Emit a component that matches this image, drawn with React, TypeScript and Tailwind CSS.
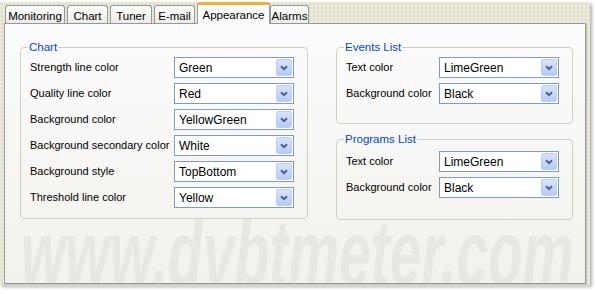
import React from "react";

const font = { fontFamily: '"Liberation Sans", Arial, sans-serif' };

type Tab = { label: string; width: string; active?: boolean };

const TABS: Tab[] = [
  { label: "Monitoring", width: "w-[60px]" },
  { label: "Chart", width: "w-[41px]" },
  { label: "Tuner", width: "w-[42px]" },
  { label: "E-mail", width: "w-[41px]" },
  { label: "Appearance", width: "w-[73px]", active: true },
  { label: "Alarms", width: "w-[39px]" },
];

function Combo({ value }: { value: string }) {
  return (
    <div className="w-[120px] h-[21px] border border-[#7f9db9] bg-white flex items-center shrink-0">
      <span className="flex-1 pl-[4px] text-[12px] leading-none text-black">{value}</span>
      <span className="w-[16px] h-[17px] mr-[1px] rounded-[2px] border border-[#bccdf7] bg-[linear-gradient(#d8e3fd,#b6cafa)] flex items-center justify-center">
        <svg width="8" height="6" viewBox="0 0 8 6">
          <path d="M1 1.2 L4 4.2 L7 1.2" fill="none" stroke="#4d6185" strokeWidth="2" />
        </svg>
      </span>
    </div>
  );
}

function Row({ label, value, labelW }: { label: string; value: string; labelW: string }) {
  return (
    <div className="flex items-center">
      <span className={`${labelW} shrink-0 text-[11px] leading-none text-black whitespace-nowrap`}>{label}</span>
      <Combo value={value} />
    </div>
  );
}

function Group({
  title,
  className,
  children,
}: {
  title: string;
  className: string;
  children: React.ReactNode;
}) {
  return (
    <fieldset className={`border border-[#d0d0bf] rounded-[4px] relative ${className}`}>
      <legend className="ml-[7px] px-[1px] text-[11.5px] leading-[14px] text-[#0046d5]">{title}</legend>
      {children}
    </fieldset>
  );
}

export default function App() {
  return (
    <div className="w-[596px] h-[294px] bg-white overflow-hidden" style={font}>
      <div className="mt-[2px] w-[590px] h-[283px] bg-[#ece9d8] bg-[radial-gradient(#dedac8_0.7px,transparent_0.8px)] bg-[length:4px_4px] pl-[4px] shadow-[2px_2px_3px_rgba(0,0,0,0.3)]">
        {/* tabs */}
        <div className="h-[21px] flex items-end pl-[1px]">
          {TABS.map((t) =>
            t.active ? (
              <div
                key={t.label}
                className={`${t.width} h-[22px] -mb-[1px] relative z-10 border-x border-[#919b9c] border-t-[3px] border-t-[#f2ac38] rounded-t-[3px] bg-[#fcfcfe] text-[11.5px] text-black flex justify-center pt-[2px]`}
              >
                {t.label}
              </div>
            ) : (
              <div
                key={t.label}
                className={`${t.width} h-[18px] mr-[2px] border border-b-0 border-[#919b9c] rounded-t-[3px] bg-[linear-gradient(#fefefe,#ecebe6)] text-[11.5px] text-black flex justify-center pt-[2px]`}
              >
                {t.label}
              </div>
            )
          )}
        </div>

        {/* page */}
        <div className="relative w-[582px] h-[261px] border border-[#919b9c] bg-[linear-gradient(#fcfcfe,#f2f1eb)] shadow-[1px_1px_0_#c9c6b6,2px_2px_0_#e0ddcd] overflow-hidden">
          <div
            aria-hidden="true"
            className="absolute left-[16px] top-[183px] text-[92px] leading-none font-bold italic text-[#e8e7e1] whitespace-nowrap origin-left scale-x-[0.62] select-none"
          >
            www.dvbtmeter.com
          </div>

          <div className="relative flex items-start pl-[15px] pt-[16px]">
            <Group title="Chart" className="w-[288px]">
              <div className="flex flex-col gap-[5px] pt-[3px] pb-[10px] pl-[9px]">
                <Row labelW="w-[144px]" label="Strength line color" value="Green" />
                <Row labelW="w-[144px]" label="Quality line color" value="Red" />
                <Row labelW="w-[144px]" label="Background color" value="YellowGreen" />
                <Row labelW="w-[144px]" label="Background secondary color" value="White" />
                <Row labelW="w-[144px]" label="Background style" value="TopBottom" />
                <Row labelW="w-[144px]" label="Threshold line color" value="Yellow" />
              </div>
            </Group>

            <div className="ml-[28px] flex flex-col gap-[8px]">
              <Group title="Events List" className="w-[237px]">
                <div className="flex flex-col gap-[5px] pt-[3px] pb-[19px] pl-[9px]">
                  <Row labelW="w-[93px]" label="Text color" value="LimeGreen" />
                  <Row labelW="w-[93px]" label="Background color" value="Black" />
                </div>
              </Group>
              <Group title="Programs List" className="w-[237px]">
                <div className="flex flex-col gap-[5px] pt-[5px] pb-[21px] pl-[9px]">
                  <Row labelW="w-[93px]" label="Text color" value="LimeGreen" />
                  <Row labelW="w-[93px]" label="Background color" value="Black" />
                </div>
              </Group>
            </div>
          </div>
        </div>
      </div>
    </div>
  );
}
